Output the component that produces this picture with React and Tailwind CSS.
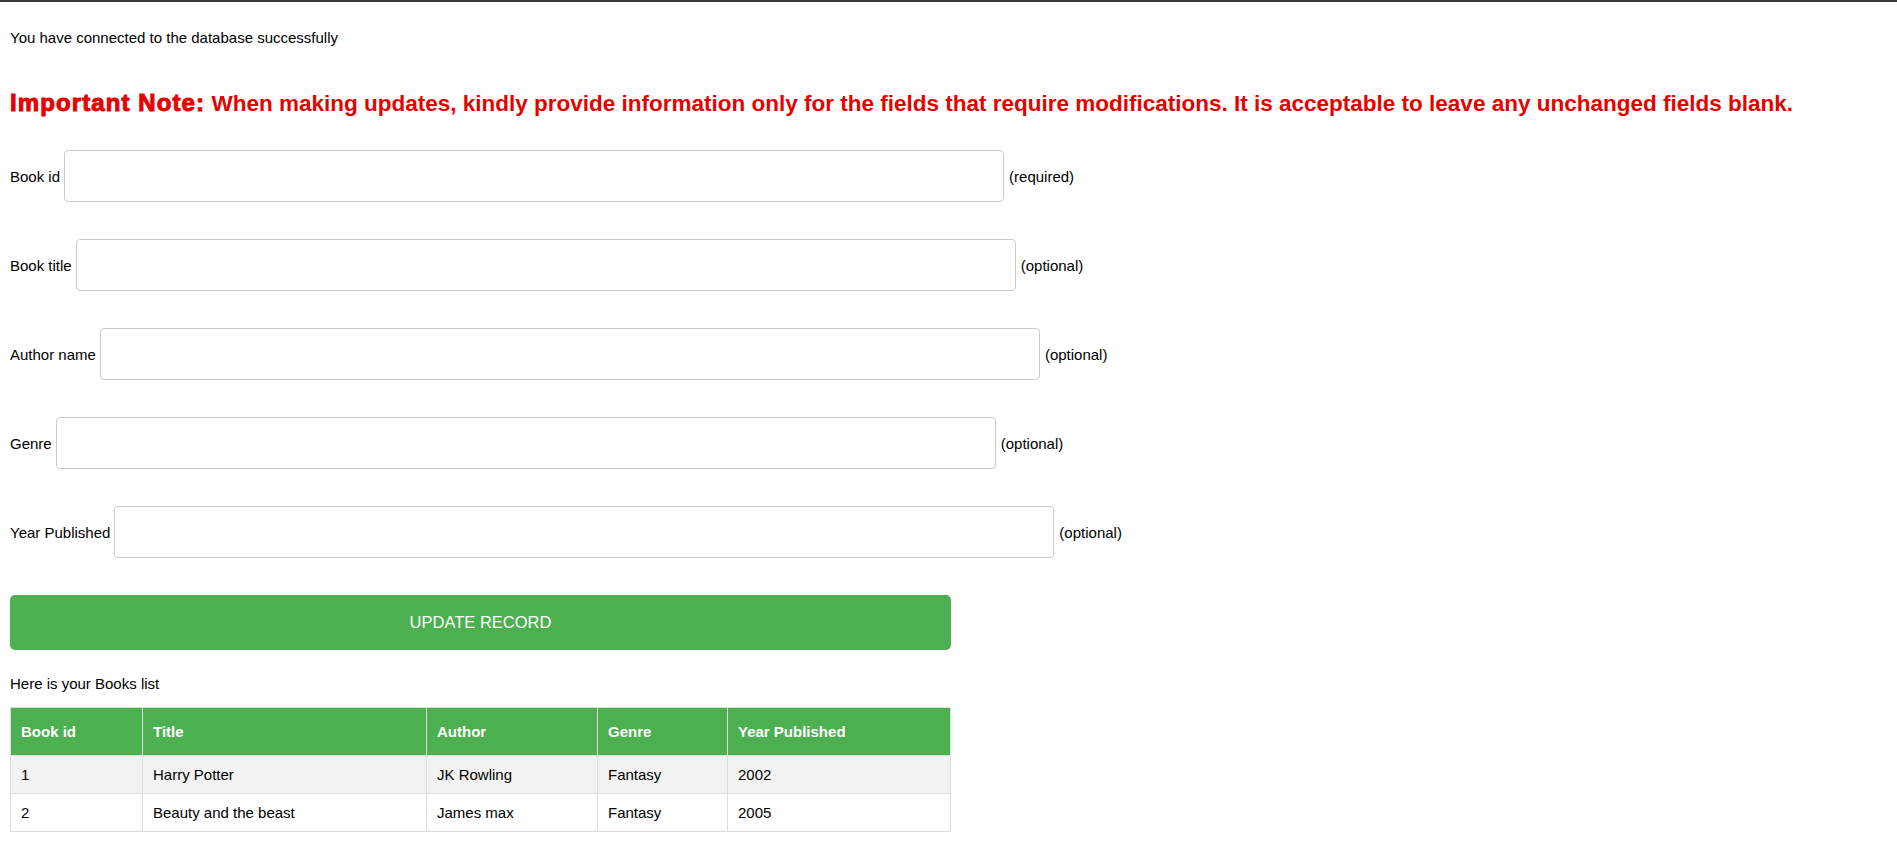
import React from "react";

const fields = [
  { label: "Book id", note: "(required)" },
  { label: "Book title", note: "(optional)" },
  { label: "Author name", note: "(optional)" },
  { label: "Genre", note: "(optional)" },
  { label: "Year Published", note: "(optional)" },
];

const rows = [
  ["1", "Harry Potter", "JK Rowling", "Fantasy", "2002"],
  ["2", "Beauty and the beast", "James max", "Fantasy", "2005"],
];

export default function App() {
  return (
    <div className="min-h-[865px] bg-white border-t-2 border-[#3a3a3a] px-[10px] font-['Liberation_Sans',Arial,sans-serif] text-[15px] text-black">
      <p className="mt-[27px] leading-[17px]">You have connected to the database successfully</p>

      <h2 className="mt-[45px] h-[26px] text-[22.5px] leading-[26px] font-bold text-[#e60000] whitespace-nowrap">
        <strong className="text-[24px] leading-[20px] tracking-[1.1px] [-webkit-text-stroke:1px_#e60000]">Important Note:</strong>{" "}
        When making updates, kindly provide information only for the fields that require modifications. It is acceptable to leave any unchanged fields blank.
      </h2>

      <form className="mt-[33px] flex flex-col gap-[37px]" onSubmit={(e) => e.preventDefault()}>
        {fields.map((f) => (
          <div key={f.label} className="flex items-center h-[52px]">
            <label className="leading-[17px]">{f.label}</label>
            <input
              type="text"
              className="ml-[4px] w-[940px] h-[52px] border border-[#cccccc] rounded-[4px] px-[12px] outline-none"
            />
            <span className="ml-[5px] leading-[17px]">{f.note}</span>
          </div>
        ))}
        <button
          type="submit"
          className="w-[941px] h-[55px] bg-[#4caf50] text-white rounded-[5px] text-[16.5px] uppercase"
        >
          Update Record
        </button>
      </form>

      <p className="mt-[25px] leading-[17px]">Here is your Books list</p>

      <table className="mt-[15px] w-[941px] border-collapse border border-[#dddddd] text-left">
        <thead>
          <tr className="bg-[#4caf50] text-white">
            <th className="w-[132px] border border-[#dddddd] px-[10px] py-[15px] leading-[17px] font-bold">Book id</th>
            <th className="w-[284px] border border-[#dddddd] px-[10px] py-[15px] leading-[17px] font-bold">Title</th>
            <th className="w-[171px] border border-[#dddddd] px-[10px] py-[15px] leading-[17px] font-bold">Author</th>
            <th className="w-[130px] border border-[#dddddd] px-[10px] py-[15px] leading-[17px] font-bold">Genre</th>
            <th className="border border-[#dddddd] px-[10px] py-[15px] leading-[17px] font-bold">Year Published</th>
          </tr>
        </thead>
        <tbody>
          {rows.map((r, i) => (
            <tr key={i} className={i % 2 === 0 ? "bg-[#f2f2f2]" : "bg-white"}>
              {r.map((c, j) => (
                <td key={j} className="border border-[#dddddd] px-[10px] py-[10px] leading-[17px]">
                  {c}
                </td>
              ))}
            </tr>
          ))}
        </tbody>
      </table>
    </div>
  );
}
